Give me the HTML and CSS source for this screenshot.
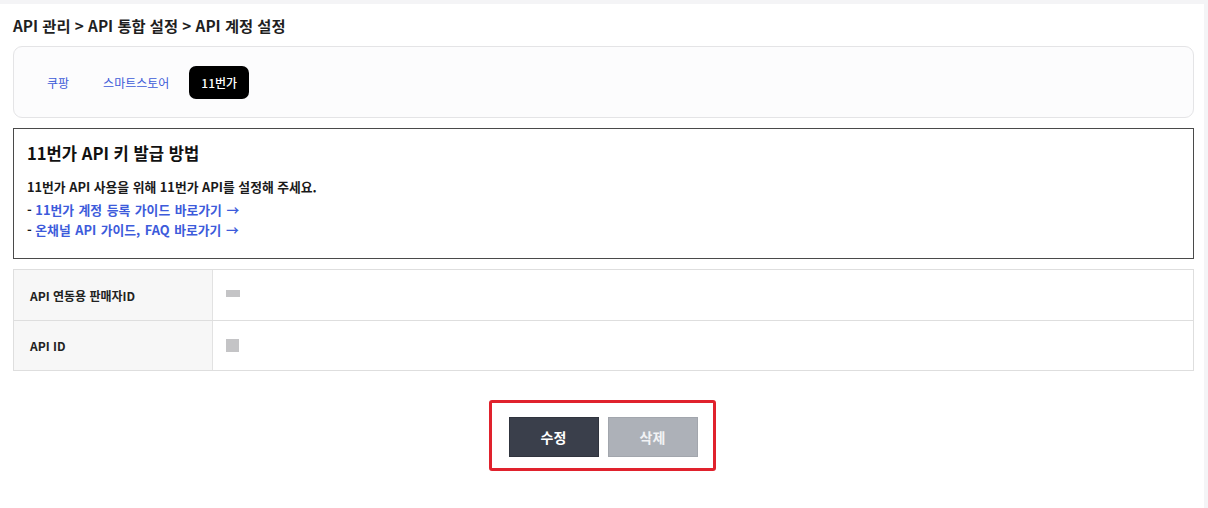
FILE: index.html
```html
<!DOCTYPE html>
<html lang="ko">
<head>
<meta charset="utf-8">
<title>API 계정 설정</title>
<link rel="stylesheet" href="styles.css">
</head>
<body>
<div class="page">
  <div class="breadcrumb">API 관리 &gt; API 통합 설정 &gt; API 계정 설정</div>

  <div class="tabs">
    <span class="tab">쿠팡</span>
    <span class="tab">스마트스토어</span>
    <span class="tab active">11번가</span>
  </div>

  <div class="guide">
    <div class="guide-title">11번가 API 키 발급 방법</div>
    <div class="guide-text">11번가 API 사용을 위해 11번가 API를 설정해 주세요.</div>
    <div class="guide-link">- <a>11번가 계정 등록 가이드 바로가기 →</a></div>
    <div class="guide-link">- <a>온채널 API 가이드, FAQ 바로가기 →</a></div>
  </div>

  <div class="table">
    <div class="row">
      <div class="label">API 연동용 판매자ID</div>
      <div class="value"><span class="mask mask-wide"></span></div>
    </div>
    <div class="row">
      <div class="label">API ID</div>
      <div class="value"><span class="mask mask-square"></span></div>
    </div>
  </div>

  <div class="actions">
    <div class="highlight">
      <button class="btn btn-primary">수정</button>
      <button class="btn btn-muted">삭제</button>
    </div>
  </div>
</div>
</body>
</html>
```

FILE: styles.css
```css
* { box-sizing: border-box; }
html, body {
  margin: 0;
  padding: 0;
  background: #f4f4f6;
  font-family: "Noto Sans CJK KR", "Noto Sans", sans-serif;
  color: #222;
}
.page {
  width: 1204px;
  height: 504px;
  margin-top: 4px;
  background: #fff;
  padding: 12px 10px 0 13px;
}
.breadcrumb {
  font-size: 15.3px;
  font-weight: 700;
  line-height: 18px;
  color: #1f1f1f;
}
.tabs {
  margin-top: 12px;
  height: 72px;
  border: 1px solid #e4e4e6;
  border-radius: 9px;
  background: #fcfcfd;
  display: flex;
  align-items: center;
  gap: 8px;
  padding: 0 20px;
}
.tab {
  height: 33px;
  padding: 0 13px;
  display: flex;
  align-items: center;
  font-size: 12px;
  color: #3d5bd8;
  border-radius: 7px;
}
.tab.active {
  background: #000;
  color: #fff;
  font-weight: 500;
  padding: 0 12px;
  margin-left: -1px;
}
.guide {
  margin-top: 10px;
  height: 131px;
  border: 1px solid #4a4a4a;
  padding: 14px 13px 0;
}
.guide-title {
  font-size: 16.6px;
  font-weight: 700;
  line-height: 20px;
  color: #111;
}
.guide-text {
  margin-top: 14px;
  margin-bottom: 3px;
  font-size: 12.8px;
  font-weight: 700;
  line-height: 20px;
  color: #1a1a1a;
}
.guide-link {
  font-size: 12.8px;
  font-weight: 700;
  line-height: 20px;
  color: #1a1a1a;
}
.guide-link a {
  color: #3d5bdb;
  word-spacing: 1px;
}
.table {
  margin-top: 10px;
  border: 1px solid #dedede;
}
.row {
  display: flex;
  height: 50px;
}
.row + .row {
  border-top: 1px solid #dedede;
}
.label {
  width: 199px;
  background: #f7f7f7;
  border-right: 1px solid #e2e2e2;
  display: flex;
  align-items: center;
  padding-left: 16px;
  font-size: 12px;
  font-weight: 700;
  color: #222;
}
.value {
  flex: 1;
  display: flex;
  align-items: center;
  padding-left: 13px;
}
.mask {
  display: block;
  background: #c4c4c6;
}
.mask-wide {
  width: 14px;
  height: 7px;
  margin-bottom: 4px;
}
.mask-square {
  width: 13px;
  height: 13px;
}
.actions {
  margin-top: 29px;
  display: flex;
  justify-content: center;
}
.highlight {
  margin-left: -3px;
  border: 3px solid #e0222d;
  border-radius: 3px;
  padding: 14px 15px 11px 17px;
  display: flex;
  gap: 9px;
}
.btn {
  width: 90px;
  height: 40px;
  border: 1px solid transparent;
  font-family: "Noto Sans CJK KR", "Noto Sans", sans-serif;
  font-size: 14px;
  font-weight: 700;
  color: #fff;
  padding: 0;
}
.btn-primary {
  background: #3a3f4b;
  border-color: #30343e;
}
.btn-muted {
  background: #adb1b8;
  border-color: #a2a6ad;
  color: #f2f3f5;
}
```
